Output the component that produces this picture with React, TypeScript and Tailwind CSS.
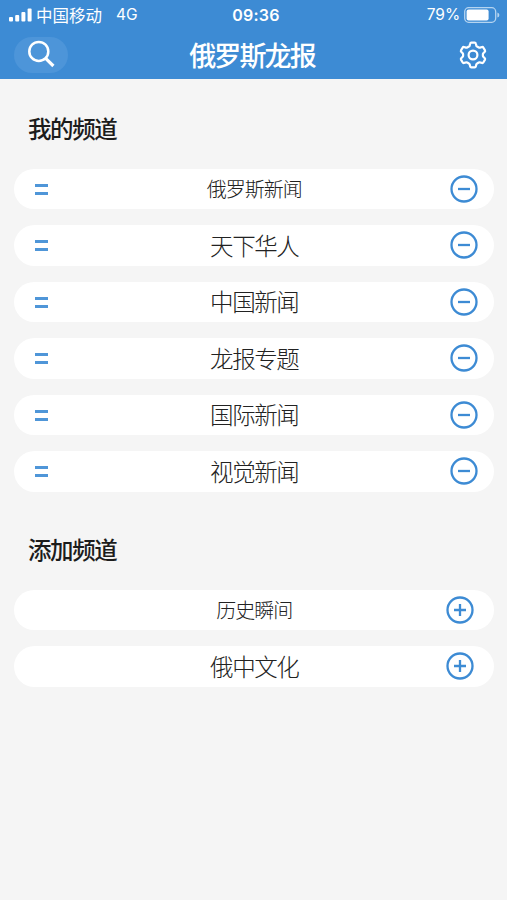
import clsx from 'clsx';

interface Channel {
  name: string;
  compact?: boolean;
}

const myChannels: Channel[] = [
  { name: '俄罗斯新闻', compact: true },
  { name: '天下华人' },
  { name: '中国新闻' },
  { name: '龙报专题' },
  { name: '国际新闻' },
  { name: '视觉新闻' },
];

const moreChannels: Channel[] = [{ name: '历史瞬间', compact: true }, { name: '俄中文化' }];

function StatusBar() {
  return (
    <div className="grid h-[30px] grid-cols-3 items-center pl-[9px] pr-[7px] text-[16px] leading-none">
      <div className="flex items-center">
        <svg width="23" height="14" viewBox="0 0 23 14" fill="currentColor">
          <rect x="0" y="9" width="4" height="4.5" rx="1" />
          <rect x="6.2" y="7" width="4" height="6.5" rx="1" />
          <rect x="12.4" y="4" width="4" height="9.5" rx="1" />
          <rect x="18.6" y="0.5" width="4" height="13" rx="1" />
        </svg>
        <span className="ml-[4px] text-[16.5px]">中国移动</span>
        <span className="ml-[14px] font-['Inter',sans-serif] text-[15.5px]">4G</span>
      </div>
      <span className="pl-[3px] text-center font-['Inter',sans-serif] text-[16px] font-semibold tracking-[0.2px]">09:36</span>
      <div className="flex items-center justify-end">
        <span className="font-['Inter',sans-serif] text-[15.5px] tracking-[-0.1px]">79%</span>
        <svg className="ml-[4px]" width="36" height="16" viewBox="0 0 36 16">
          <rect x="0.7" y="0.7" width="31" height="14.6" rx="4" fill="none" stroke="#b5d4f0" strokeWidth="1.3" />
          <rect x="2.6" y="2.6" width="22" height="10.8" rx="2" fill="currentColor" />
          <path d="M33.4 5.4a2.7 2.7 0 0 1 0 5.2z" fill="#b5d4f0" />
        </svg>
      </div>
    </div>
  );
}

function Header() {
  return (
    <header className="h-[79px] bg-[#3d8bd4] text-white">
      <StatusBar />
      <div className="flex h-[49px] items-center justify-between pl-[14px] pr-[20px]">
        <button className="flex h-9 w-[54px] items-center justify-center rounded-full bg-[#4d95d9] pb-px pr-px">
          <svg width="28" height="28" viewBox="0 0 28 28" fill="none" stroke="currentColor">
            <circle cx="11.8" cy="11.4" r="9.5" strokeWidth="2.5" />
            <path d="M18.4 18.2l8 7.8" strokeWidth="3.2" />
          </svg>
        </button>
        <h1 className="pl-[3px] text-[27px] font-medium leading-none tracking-[-1.9px]">俄罗斯龙报</h1>
        <div className="flex w-[54px] justify-end">
          <svg
            width="28"
            height="28"
            viewBox="0 0 28 28"
            fill="none"
            stroke="currentColor"
            strokeWidth="2.2"
            strokeLinejoin="round"
          >
            <path d="M12.3 1.700h3.400q.9 0 1.100.9l.5 2q.2.600.800.900l1.700 1q.6.300 1.200.100l2.100-.6q.8-.2 1.200.5l1.700 2.900q.4.800-.2 1.400l-1.500 1.500q-.4.400-.4 1v1.400q0 .6.400 1l1.500 1.500q.6.600.2 1.400l-1.700 2.900q-.4.700-1.200.5l-2.100-.6q-.6-.2-1.200.1l-1.700 1q-.6.300-.8.900l-.5 2q-.2.900-1.100.9h-3.400q-.9 0-1.100-.9l-.5-2q-.2-.6-.8-.9l-1.700-1q-.6-.3-1.200-.1l-2.100.6q-.8.200-1.200-.5L2 18.600q-.4-.8.200-1.400l1.500-1.500q.4-.4.400-1v-1.400q0-.6-.4-1l-1.500-1.500Q1.600 10.200 2 9.400l1.700-2.900q.4-.7 1.200-.5l2.100.6q.6.200 1.200-.1l1.700-1q.6-.3.800-.9l.5-2q.2-.9 1.100-.9z" />
            <circle cx="14" cy="14" r="4.4" />
          </svg>
        </div>
      </div>
    </header>
  );
}

function ChannelRow({ channel, added }: { channel: Channel; added: boolean }) {
  return (
    <li
      className={clsx(
        'grid h-[40.5px] grid-cols-[60px_1fr_60px] items-center rounded-full bg-white',
        added ? 'pl-[21px] pr-[16.5px]' : 'pl-[21px] pr-[20.5px]',
      )}
    >
      <div>
        {added && (
          <div className="flex w-[13px] flex-col gap-[5px] pt-px">
            <span className="h-[3px] bg-[#4f96d8]" />
            <span className="h-[3px] bg-[#4f96d8]" />
          </div>
        )}
      </div>
      <span
        className={clsx(
          'text-center font-light leading-none text-[#222]',
          added && 'pr-[4px]',
          channel.compact ? 'text-[20px] tracking-[-1px]' : 'text-[23.5px] tracking-[-1.4px]',
        )}
      >
        {channel.name}
      </span>
      <button className="justify-self-end text-[#3d8bd4]">
        <svg className="block" width="28" height="28" viewBox="0 0 28 28" fill="none" stroke="currentColor" strokeWidth="2.3">
          <circle cx="14" cy="14" r="12.5" />
          <path d={added ? 'M8 14h12' : 'M8 14h12M14 8v12'} />
        </svg>
      </button>
    </li>
  );
}

function ChannelSection({ title, channels, added }: { title: string; channels: Channel[]; added: boolean }) {
  return (
    <section>
      <h2 className="pl-[14px] text-[23.5px] font-medium leading-[40px] tracking-[-1.4px] text-[#1c1c1c]">{title}</h2>
      <ul className="mt-[20.5px] flex flex-col gap-4">
        {channels.map((channel) => (
          <ChannelRow key={channel.name} channel={channel} added={added} />
        ))}
      </ul>
    </section>
  );
}

export default function App() {
  return (
    <div className="h-[900px] w-[507px] overflow-hidden bg-[#f5f5f5] font-['Noto_Sans_CJK_SC',sans-serif]">
      <Header />
      <main className="flex flex-col gap-[37.5px] pl-[14px] pr-[13px] pt-[29px]">
        <ChannelSection title="我的频道" channels={myChannels} added />
        <ChannelSection title="添加频道" channels={moreChannels} added={false} />
      </main>
    </div>
  );
}
